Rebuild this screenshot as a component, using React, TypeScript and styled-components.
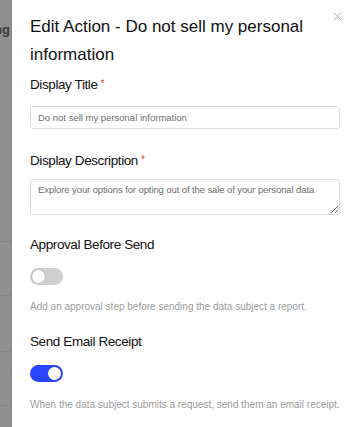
import React from "react";
import styled, { createGlobalStyle } from "styled-components";

const Global = createGlobalStyle`
  html, body { margin: 0; padding: 0; background: #fff; }
  body { font-family: "Liberation Sans", Arial, sans-serif; }
  * { box-sizing: border-box; }
`;

const Page = styled.div`
  display: flex;
  width: 350px;
  height: 427px;
  overflow: hidden;
`;

const Backdrop = styled.div`
  position: relative;
  width: 12px;
  flex: none;
  background: #8f8f8f;
  border-right: 1px solid #868686;
  overflow: hidden;
`;

const BackText = styled.div`
  position: absolute;
  right: 1px;
  top: 22px;
  font-size: 13px;
  line-height: 16px;
  font-weight: 700;
  color: #3a3a3a;
  white-space: nowrap;
`;

const BackRule = styled.div<{ $top: number }>`
  position: absolute;
  left: 0;
  right: 0;
  top: ${(p) => p.$top}px;
  height: 1px;
  background: #838383;
`;

const Modal = styled.div`
  position: relative;
  flex: 1;
  background: #fff;
  padding: 13px 19px 0 18px;
  display: flex;
  flex-direction: column;
`;

const Close = styled.button`
  position: absolute;
  top: 12px;
  right: 17px;
  width: 9px;
  height: 9px;
  padding: 0;
  border: none;
  background: none;
  display: flex;
`;

const Title = styled.h2`
  margin: 0;
  font-size: 17px;
  line-height: 28px;
  font-weight: 400;
  color: #111;
  padding-right: 10px;
`;

const Field = styled.div<{ $mt: number }>`
  margin-top: ${(p) => p.$mt}px;
  display: flex;
  flex-direction: column;
`;

const Label = styled.label`
  font-size: 13.5px;
  line-height: 18px;
  height: 18px;
  color: #111;
  letter-spacing: -0.4px;
`;

const Req = styled.span`
  position: relative;
  top: -2px;
  color: #e0403a;
  font-size: 10px;
  letter-spacing: 0;
  margin-left: 3px;
`;

const Input = styled.input`
  margin-top: 12px;
  width: 100%;
  height: 23px;
  border: 1px solid #dadada;
  border-radius: 3px;
  padding: 0 7px;
  font-family: inherit;
  font-size: 9.5px;
  color: #555;
  outline: none;
  &::placeholder { color: #6e6e6e; }
`;

const TextArea = styled.textarea`
  margin-top: 9px;
  width: 100%;
  height: 36px;
  border: 1px solid #dadada;
  border-radius: 3px;
  padding: 4px 7px;
  font-family: inherit;
  font-size: 9.5px;
  line-height: 12px;
  letter-spacing: -0.1px;
  color: #555;
  outline: none;
  resize: vertical;
  &::placeholder { color: #6e6e6e; }
`;

const Toggle = styled.div<{ $on: boolean }>`
  margin-top: 14px;
  width: 33px;
  height: 17px;
  border-radius: 9px;
  background: ${(p) => (p.$on ? "#2a45ff" : "#cecece")};
  padding: 2px;
  display: flex;
  justify-content: ${(p) => (p.$on ? "flex-end" : "flex-start")};
`;

const Knob = styled.div<{ $on: boolean }>`
  width: 13px;
  height: 13px;
  border-radius: 50%;
  background: #fff;
  box-shadow: ${(p) => (p.$on ? "none" : "0 0 0 0.6px #b8b8b8")};
`;

const Hint = styled.p<{ $mt: number }>`
  margin: ${(p) => p.$mt}px 0 0;
  font-size: 10px;
  line-height: 14px;
  color: #9c9c9c;
  white-space: nowrap;
`;

const Edge = styled.div`
  width: 1px;
  flex: none;
  display: flex;
  flex-direction: column;
`;

const EdgePart = styled.div<{ $h?: number; $c: string }>`
  height: ${(p) => (p.$h ? `${p.$h}px` : "auto")};
  flex: ${(p) => (p.$h ? "none" : "1")};
  background: ${(p) => p.$c};
`;

export default function App() {
  return (
    <>
      <Global />
      <Page>
        <Backdrop>
          <BackText>ng</BackText>
          <BackRule $top={241} />
          <BackRule $top={295} />
          <BackRule $top={351} />
          <BackRule $top={405} />
        </Backdrop>
        <Modal>
          <Close aria-label="Close">
            <svg width="9" height="9" viewBox="0 0 9 9">
              <path d="M0.5 0.5L8.5 8.5M8.5 0.5L0.5 8.5" stroke="#a8a8a8" strokeWidth="0.9" />
            </svg>
          </Close>
          <Title>Edit Action - Do not sell my personal information</Title>
          <Field $mt={7}>
            <Label>
              Display Title<Req>*</Req>
            </Label>
            <Input placeholder="Do not sell my personal information" />
          </Field>
          <Field $mt={23}>
            <Label>
              Display Description<Req>*</Req>
            </Label>
            <TextArea placeholder="Explore your options for opting out of the sale of your personal data" />
          </Field>
          <Field $mt={21}>
            <Label>Approval Before Send</Label>
            <Toggle $on={false}>
              <Knob $on={false} />
            </Toggle>
            <Hint $mt={15}>Add an approval step before sending the data subject a report.</Hint>
          </Field>
          <Field $mt={19}>
            <Label>Send Email Receipt</Label>
            <Toggle $on={true}>
              <Knob $on={true} />
            </Toggle>
            <Hint $mt={16}>When the data subject submits a request, send them an email receipt.</Hint>
          </Field>
        </Modal>
        <Edge>
          <EdgePart $h={290} $c="#ffffff" />
          <EdgePart $h={22} $c="#3f5aa8" />
          <EdgePart $c="#4f4f4f" />
        </Edge>
      </Page>
    </>
  );
}
